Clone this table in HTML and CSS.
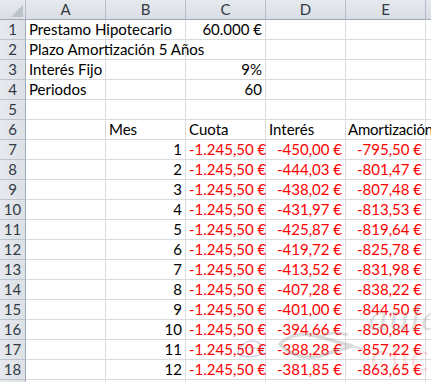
FILE: index.html
```html
<!DOCTYPE html>
<html>
<head>
<meta charset="utf-8">
<link rel="stylesheet" href="styles.css">
</head>
<body>
<div class="sheet">
<table class="grid">
<colgroup><col class="c-rh"><col class="c-col"><col class="c-col"><col class="c-col"><col class="c-col"><col class="c-col"><col class="c-f"></colgroup>
<thead>
<tr><th class="corner"><span class="tri"></span></th><th class="ch">A</th><th class="ch">B</th><th class="ch">C</th><th class="ch">D</th><th class="ch">E</th><th class="ch"></th></tr>
</thead>
<tbody>
<tr><th class="rh">1</th><td>Prestamo Hipotecario</td><td></td><td class="num">60.000 €</td><td></td><td></td><td></td></tr>
<tr><th class="rh">2</th><td>Plazo Amortización 5 Años</td><td></td><td></td><td></td><td></td><td></td></tr>
<tr><th class="rh">3</th><td>Interés Fijo</td><td></td><td class="num">9%</td><td></td><td></td><td></td></tr>
<tr><th class="rh">4</th><td>Periodos</td><td></td><td class="num">60</td><td></td><td></td><td></td></tr>
<tr><th class="rh">5</th><td></td><td></td><td></td><td></td><td></td><td></td></tr>
<tr><th class="rh">6</th><td></td><td>Mes</td><td>Cuota</td><td>Interés</td><td class="tight">Amortización</td><td></td></tr>
<tr><th class="rh">7</th><td></td><td class="num">1</td><td class="num red">-1.245,50 €</td><td class="num red">-450,00 €</td><td class="num red">-795,50 €</td><td></td></tr>
<tr><th class="rh">8</th><td></td><td class="num">2</td><td class="num red">-1.245,50 €</td><td class="num red">-444,03 €</td><td class="num red">-801,47 €</td><td></td></tr>
<tr><th class="rh">9</th><td></td><td class="num">3</td><td class="num red">-1.245,50 €</td><td class="num red">-438,02 €</td><td class="num red">-807,48 €</td><td></td></tr>
<tr><th class="rh">10</th><td></td><td class="num">4</td><td class="num red">-1.245,50 €</td><td class="num red">-431,97 €</td><td class="num red">-813,53 €</td><td></td></tr>
<tr><th class="rh">11</th><td></td><td class="num">5</td><td class="num red">-1.245,50 €</td><td class="num red">-425,87 €</td><td class="num red">-819,64 €</td><td></td></tr>
<tr><th class="rh">12</th><td></td><td class="num">6</td><td class="num red">-1.245,50 €</td><td class="num red">-419,72 €</td><td class="num red">-825,78 €</td><td></td></tr>
<tr><th class="rh">13</th><td></td><td class="num">7</td><td class="num red">-1.245,50 €</td><td class="num red">-413,52 €</td><td class="num red">-831,98 €</td><td></td></tr>
<tr><th class="rh">14</th><td></td><td class="num">8</td><td class="num red">-1.245,50 €</td><td class="num red">-407,28 €</td><td class="num red">-838,22 €</td><td></td></tr>
<tr><th class="rh">15</th><td></td><td class="num">9</td><td class="num red">-1.245,50 €</td><td class="num red">-401,00 €</td><td class="num red">-844,50 €</td><td></td></tr>
<tr><th class="rh">16</th><td></td><td class="num">10</td><td class="num red">-1.245,50 €</td><td class="num red">-394,66 €</td><td class="num red">-850,84 €</td><td></td></tr>
<tr><th class="rh">17</th><td></td><td class="num">11</td><td class="num red">-1.245,50 €</td><td class="num red">-388,28 €</td><td class="num red">-857,22 €</td><td></td></tr>
<tr><th class="rh">18</th><td></td><td class="num">12</td><td class="num red">-1.245,50 €</td><td class="num red">-381,85 €</td><td class="num red">-863,65 €</td><td></td></tr>
<tr><th class="rh">19</th><td></td><td></td><td></td><td></td><td></td><td></td></tr>
</tbody>
</table>
<div class="watermark" aria-hidden="true">
<svg class="wm-hat" width="90" height="38" viewBox="0 0 90 38">
<path d="M4 20 C 14 10, 30 8, 44 13 L 76 22 L 44 32 C 28 36, 12 30, 4 20 Z" fill="none" stroke="#9a9a9a" stroke-width="3.5" stroke-linejoin="round"/>
<path d="M44 13 C 52 8, 62 8, 72 11" fill="none" stroke="#a0a0a0" stroke-width="2.5"/>
<path d="M76 22 L 88 26" stroke="#a8a8a8" stroke-width="2.5"/>
</svg>
<svg class="wm-blue" width="32" height="22" viewBox="0 0 32 22">
<path d="M3 17 C 4 7, 13 2, 22 5 C 29 8, 30 15, 24 18 C 17 21, 8 20, 3 17 Z" fill="none" stroke="#3a4fa8" stroke-width="1.5"/>
<path d="M6 12 C 12 10, 19 10, 27 13" fill="none" stroke="#3a4fa8" stroke-width="1.2"/>
</svg>
<span class="wm-aula">aula</span>
<span class="wm-clic">clic</span>
</div>
</div>
</body>
</html>
```

FILE: styles.css
```css
html, body {
  margin: 0;
  padding: 0;
  background: #ffffff;
}
.sheet {
  position: relative;
  width: 431px;
  height: 382px;
  overflow: hidden;
}
.grid {
  border-collapse: separate;
  border-spacing: 0;
  table-layout: fixed;
  width: 460px;
  font-family: Lato, "Open Sans", sans-serif;
  font-size: 15px;
  color: #000;
}
.c-rh { width: 26px; }
.c-col { width: 80px; }
.c-f { width: 34px; }
.grid th, .grid td {
  height: 19px;
  padding: 0 3px;
  border-right: 1px solid #dadcdd;
  border-bottom: 1px solid #dadcdd;
  white-space: nowrap;
  overflow: visible;
  vertical-align: bottom;
  line-height: 19px;
  text-align: left;
  font-weight: normal;
  box-sizing: content-box;
}
.grid thead th {
  background: linear-gradient(#e6e9ee, #dadee4);
  border-right: 1px solid #b7bec9;
  border-bottom: 1px solid #9eaabb;
  color: #333a45;
  text-align: center;
  padding: 0;
}
.grid .rh {
  background: linear-gradient(90deg, #e6e9ee, #dde1e6);
  border-right: 1px solid #9eaabb;
  border-bottom: 1px solid #bcc4cf;
  color: #333a45;
  text-align: center;
  padding: 0;
}
.corner {
  position: relative;
}
.tri {
  position: absolute;
  right: 2px;
  bottom: 2px;
  width: 0;
  height: 0;
  border-left: 12px solid transparent;
  border-bottom: 12px solid #bcc2ca;
}
.num { text-align: right !important; }
.red { color: #ff0000; }
.tight { letter-spacing: -0.2px; padding-left: 2px !important; }
.watermark {
  position: absolute;
  left: 0;
  top: 0;
  width: 431px;
  height: 382px;
  pointer-events: none;
}
.wm-hat {
  position: absolute;
  left: 276px;
  top: 324px;
  opacity: 0.35;
}
.wm-blue {
  position: absolute;
  left: 235px;
  top: 337px;
  opacity: 0.22;
}
.wm-aula {
  position: absolute;
  left: 368px;
  top: 298px;
  font-family: "DejaVu Serif", serif;
  font-style: italic;
  font-size: 34px;
  color: #999;
  opacity: 0.3;
}
.wm-clic {
  position: absolute;
  left: 370px;
  top: 338px;
  font-family: "DejaVu Sans", sans-serif;
  font-size: 36px;
  color: #e04040;
  opacity: 0.14;
}
```
